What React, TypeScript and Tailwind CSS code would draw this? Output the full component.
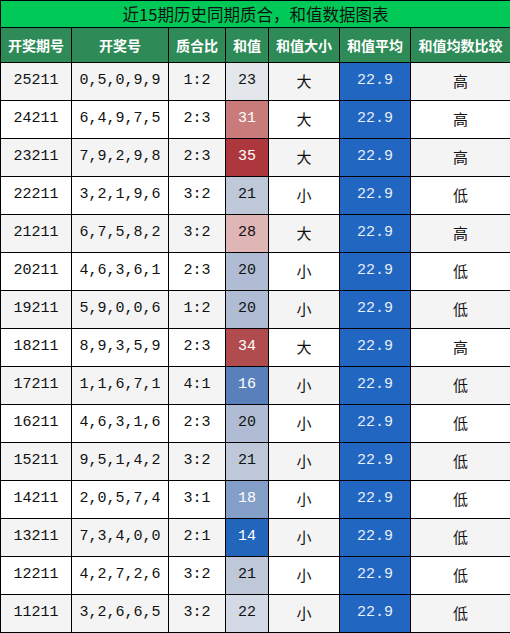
import React from 'react';

interface Row {
  issue: string;
  nums: string;
  ratio: string;
  sum: number;
  size: string;
  level: string;
}

const rows: Row[] = [
  { issue: '25211', nums: '0,5,0,9,9', ratio: '1:2', sum: 23, size: '大', level: '高' },
  { issue: '24211', nums: '6,4,9,7,5', ratio: '2:3', sum: 31, size: '大', level: '高' },
  { issue: '23211', nums: '7,9,2,9,8', ratio: '2:3', sum: 35, size: '大', level: '高' },
  { issue: '22211', nums: '3,2,1,9,6', ratio: '3:2', sum: 21, size: '小', level: '低' },
  { issue: '21211', nums: '6,7,5,8,2', ratio: '3:2', sum: 28, size: '大', level: '高' },
  { issue: '20211', nums: '4,6,3,6,1', ratio: '2:3', sum: 20, size: '小', level: '低' },
  { issue: '19211', nums: '5,9,0,0,6', ratio: '1:2', sum: 20, size: '小', level: '低' },
  { issue: '18211', nums: '8,9,3,5,9', ratio: '2:3', sum: 34, size: '大', level: '高' },
  { issue: '17211', nums: '1,1,6,7,1', ratio: '4:1', sum: 16, size: '小', level: '低' },
  { issue: '16211', nums: '4,6,3,1,6', ratio: '2:3', sum: 20, size: '小', level: '低' },
  { issue: '15211', nums: '9,5,1,4,2', ratio: '3:2', sum: 21, size: '小', level: '低' },
  { issue: '14211', nums: '2,0,5,7,4', ratio: '3:1', sum: 18, size: '小', level: '低' },
  { issue: '13211', nums: '7,3,4,0,0', ratio: '2:1', sum: 14, size: '小', level: '低' },
  { issue: '12211', nums: '4,2,7,2,6', ratio: '3:2', sum: 21, size: '小', level: '低' },
  { issue: '11211', nums: '3,2,6,6,5', ratio: '3:2', sum: 22, size: '小', level: '低' },
];

/** 和值 → 热力色 */
const sumColor: Record<number, string> = {
  14: 'bg-[#2166bb] text-white',
  16: 'bg-[#5a80bc] text-white',
  18: 'bg-[#839fc8] text-white',
  20: 'bg-[#afbcd3] text-[#111]',
  21: 'bg-[#bec8d8] text-[#111]',
  22: 'bg-[#d4dae5] text-[#111]',
  23: 'bg-[#e3e6eb] text-[#111]',
  28: 'bg-[#e0b5b5] text-[#111]',
  31: 'bg-[#c97b7b] text-white',
  34: 'bg-[#b04c4e] text-white',
  35: 'bg-[#ac383d] text-white',
};

const mono = "font-['Liberation_Mono',monospace]";
const cjk = "font-['Noto_Sans_CJK_SC',sans-serif]";

const headers = ['开奖期号', '开奖号', '质合比', '和值', '和值大小', '和值平均', '和值均数比较'];
const widths = ['w-[71px]', 'w-[97px]', 'w-[57px]', 'w-[43px]', 'w-[71px]', 'w-[71px]', 'w-[100px]'];

const App: React.FC = () => {
  return (
    <div className="w-[510px] bg-white">
      <table className="w-[510px] table-fixed border-collapse text-[#111]">
        <colgroup>
          {widths.map((w, i) => (
            <col key={i} className={w} />
          ))}
        </colgroup>
        <thead>
          <tr className="h-[27px]">
            <th
              colSpan={7}
              className={`border border-black bg-[#00c957] p-0 text-[16.5px] font-normal leading-[26px] text-[#111] ${cjk}`}
            >
              近15期历史同期质合，和值数据图表
            </th>
          </tr>
          <tr className="h-[35px]">
            {headers.map((h) => (
              <th
                key={h}
                className={`border border-black bg-[#2e8b57] p-0 text-[14px] font-bold text-white ${cjk}`}
              >
                {h}
              </th>
            ))}
          </tr>
        </thead>
        <tbody>
          {rows.map((r, i) => {
            const bg = i % 2 === 0 ? 'bg-[#f4f4f4]' : 'bg-white';
            return (
              <tr key={r.issue} className="h-[38px]">
                <td className={`border border-black ${bg} p-0 text-center text-[15px] ${mono}`}>{r.issue}</td>
                <td className={`border border-black ${bg} p-0 text-center text-[15px] ${mono}`}>{r.nums}</td>
                <td className={`border border-black ${bg} p-0 text-center text-[15px] ${mono}`}>{r.ratio}</td>
                <td className={`border border-black ${sumColor[r.sum]} p-0 text-center text-[15px] ${mono}`}>
                  {r.sum}
                </td>
                <td className={`border border-black ${bg} p-0 text-center text-[15px] ${cjk}`}>{r.size}</td>
                <td className={`border border-black bg-[#2166c0] p-0 text-center text-[15px] text-[#e8eef8] ${mono}`}>
                  22.9
                </td>
                <td className={`border border-black ${bg} p-0 text-center text-[15px] ${cjk}`}>{r.level}</td>
              </tr>
            );
          })}
        </tbody>
      </table>
    </div>
  );
};

export default App;
